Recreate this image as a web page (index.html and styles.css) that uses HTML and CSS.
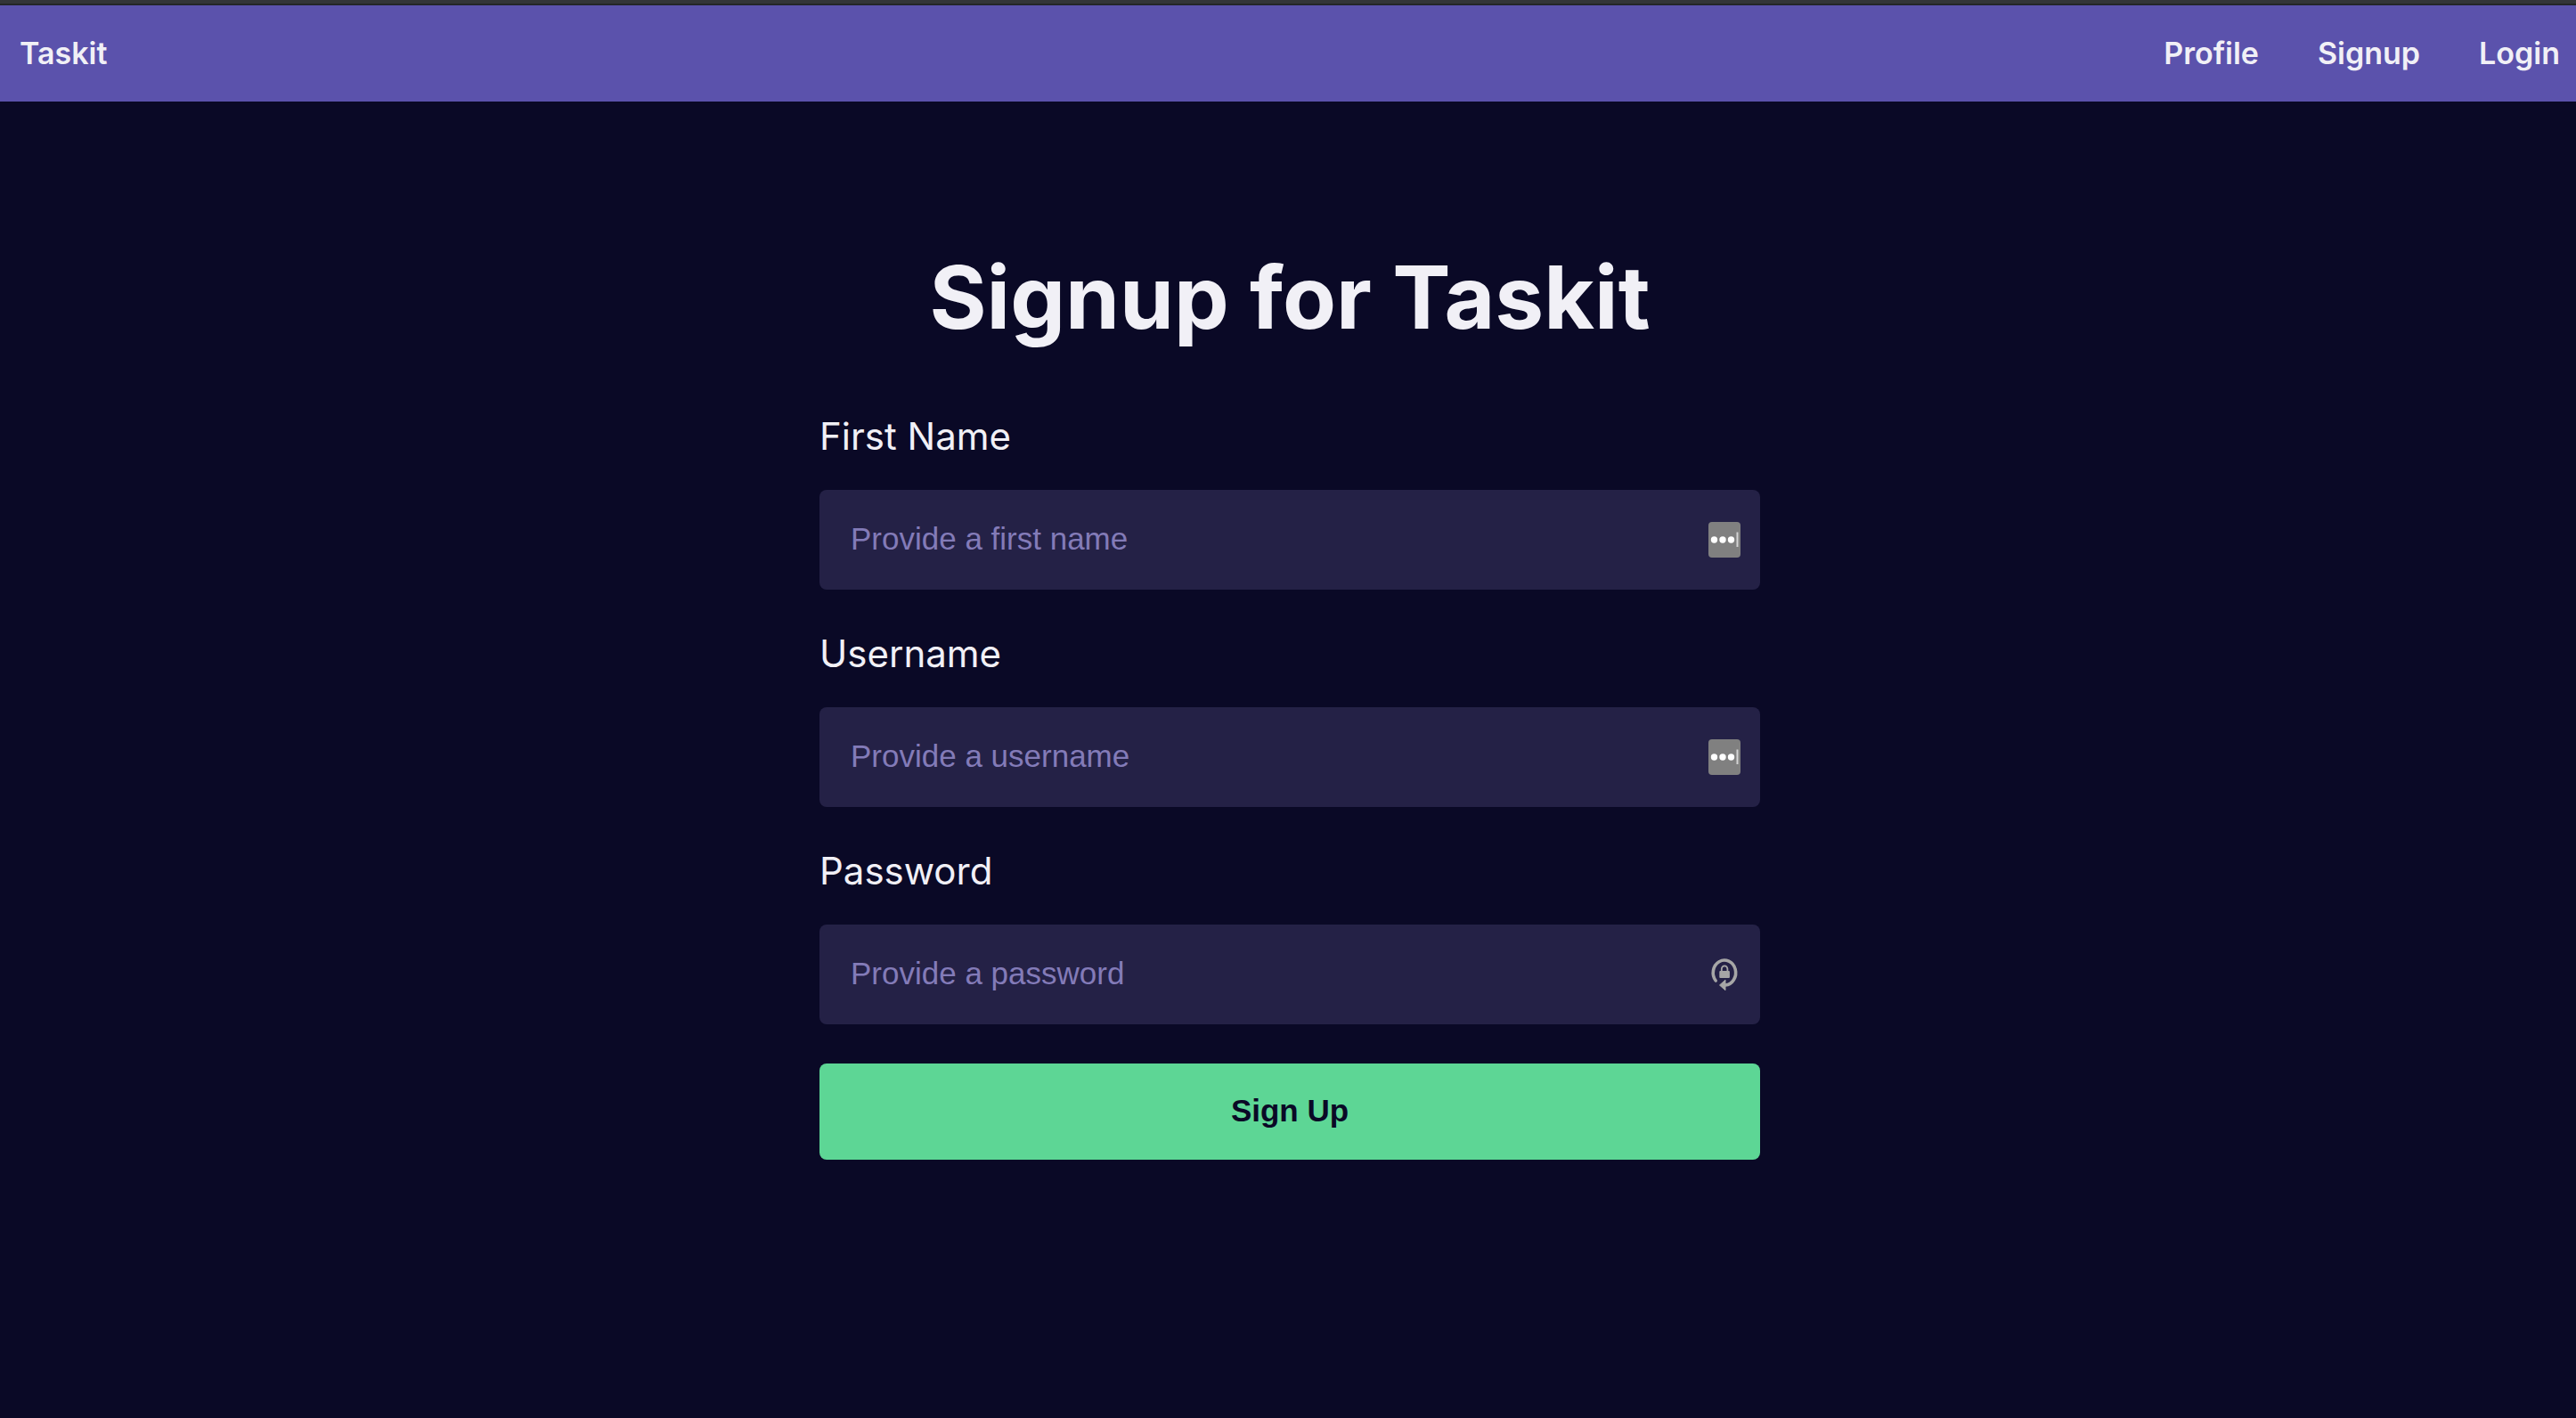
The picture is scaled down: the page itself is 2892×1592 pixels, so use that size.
FILE: index.html
```html
<!DOCTYPE html>
<html lang="en">
<head>
  <meta charset="utf-8">
  <meta name="viewport" content="width=device-width, initial-scale=1">
  <title>Taskit</title>
  <link rel="stylesheet" href="styles.css">
</head>
<body>
  <header class="navbar">
    <a class="nav-link" href="#">Taskit</a>
    <nav class="nav-menu">
      <a class="nav-link" href="#profile">Profile</a>
      <a class="nav-link" href="#signup">Signup</a>
      <a class="nav-link" href="#login">Login</a>
    </nav>
  </header>
  <main class="signup">
    <h1 class="title">Signup for Taskit</h1>
    <form class="form">
      <div class="field">
        <label class="label" for="firstName">First Name</label>
        <div class="control">
          <input class="input" id="firstName" type="text" placeholder="Provide a first name">
          <svg class="icon" viewBox="0 0 36 40" aria-hidden="true">
            <rect width="36" height="40" rx="4" fill="#808080"/>
            <g fill="#fff"><circle cx="6.5" cy="20" r="3.7"/><circle cx="16" cy="20" r="3.7"/><circle cx="25.5" cy="20" r="3.7"/></g>
            <rect x="31.5" y="11.5" width="2" height="16.5" fill="#d4d4d4"/>
          </svg>
        </div>
      </div>
      <div class="field">
        <label class="label" for="username">Username</label>
        <div class="control">
          <input class="input" id="username" type="text" placeholder="Provide a username">
          <svg class="icon" viewBox="0 0 36 40" aria-hidden="true">
            <rect width="36" height="40" rx="4" fill="#808080"/>
            <g fill="#fff"><circle cx="6.5" cy="20" r="3.7"/><circle cx="16" cy="20" r="3.7"/><circle cx="25.5" cy="20" r="3.7"/></g>
            <rect x="31.5" y="11.5" width="2" height="16.5" fill="#d4d4d4"/>
          </svg>
        </div>
      </div>
      <div class="field">
        <label class="label" for="password">Password</label>
        <div class="control">
          <input class="input" id="password" type="password" placeholder="Provide a password">
          <svg class="icon" viewBox="0 0 36 40" aria-hidden="true">
            <path d="M8.2 27A12.7 14 0 1 1 19 32" fill="none" stroke="#a6a6a6" stroke-width="3.6" stroke-linecap="round"/>
            <path d="M12.5 32L19 26.2V37.8Z" fill="#a6a6a6" stroke="#a6a6a6" stroke-linejoin="round"/>
            <rect x="12.3" y="16" width="11.6" height="8" rx="1" fill="#a6a6a6"/>
            <path d="M14.8 17v-3.2a3.3 3.4 0 0 1 6.6 0V17" fill="none" stroke="#a6a6a6" stroke-width="1.8"/>
          </svg>
        </div>
      </div>
      <button class="submit" type="submit">Sign Up</button>
    </form>
  </main>
</body>
</html>
```
FILE: styles.css
```css
* {
  box-sizing: border-box;
}

body {
  margin: 0;
  min-height: 100vh;
  border-top: 4px solid #333538;
  background: #0a0926;
  color: #f1f0f6;
  font-family: Inter, "Liberation Sans", sans-serif;
}

.navbar {
  display: flex;
  justify-content: space-between;
  align-items: center;
  height: 110px;
  padding: 0 18px 0 22px;
  border-top: 2px solid #242628;
  background: #5b52ac;
}

.nav-menu {
  display: flex;
  gap: 66px;
}

.nav-link {
  color: inherit;
  font-size: 34px;
  font-weight: 600;
  line-height: 44px;
  text-decoration: none;
}

.signup {
  display: flex;
  flex-direction: column;
  align-items: center;
  gap: 64px;
  padding: 156px 24px 64px 28px;
}

.title {
  margin: 0;
  font-size: 98px;
  font-weight: 700;
  line-height: 128px;
}

.form {
  display: flex;
  flex-direction: column;
  gap: 44px;
  width: 100%;
  max-width: 1056px;
}

.field {
  display: flex;
  flex-direction: column;
  gap: 32px;
}

.label {
  font-size: 42px;
  line-height: 56px;
}

.control {
  position: relative;
}

.input {
  display: block;
  width: 100%;
  height: 112px;
  padding: 0 80px 2px 35px;
  border: 0;
  border-radius: 8px;
  background: #242146;
  color: inherit;
  font-family: "Liberation Sans", Arial, sans-serif;
  font-size: 35px;
}

.input::placeholder {
  color: #837bb8;
  opacity: 1;
}

.icon {
  position: absolute;
  top: 36px;
  right: 22px;
  width: 36px;
  height: 40px;
}

.submit {
  height: 108px;
  padding: 0 0 2px;
  border: 0;
  border-radius: 8px;
  background: #5dd695;
  color: #0a0926;
  font-family: "Liberation Sans", Arial, sans-serif;
  font-size: 35px;
  font-weight: 700;
  cursor: pointer;
}
```
